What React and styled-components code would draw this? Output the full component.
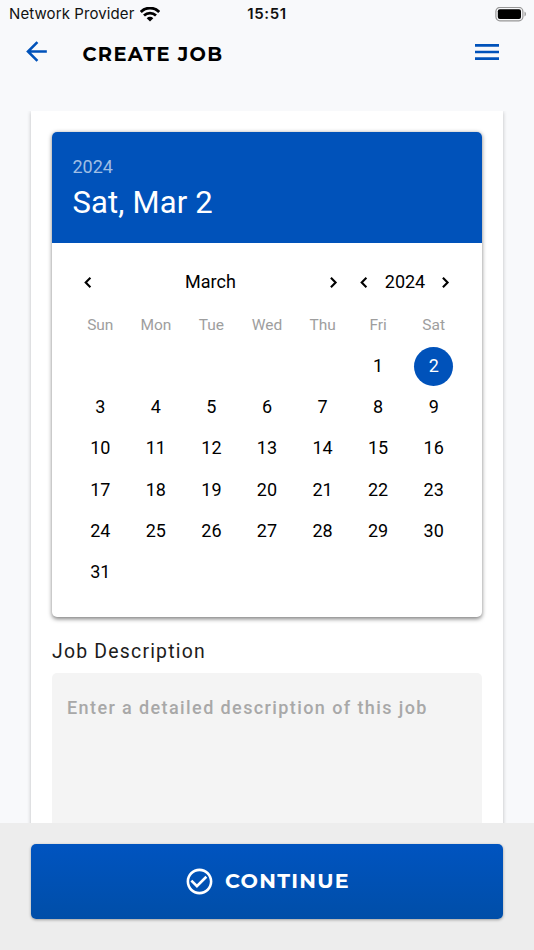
import React from "react";
import styled, { createGlobalStyle } from "styled-components";
import { MdArrowBack, MdMenu, MdCheckCircleOutline } from "react-icons/md";

const GlobalStyle = createGlobalStyle`
  * {
    box-sizing: border-box;
  }
  body {
    margin: 0;
    background: #f8f9fb;
    font-family: Roboto, sans-serif;
  }
  button {
    padding: 0;
    border: none;
    background: none;
    color: inherit;
    font-family: inherit;
    cursor: pointer;
  }
  svg {
    display: block;
  }
`;

const Screen = styled.div`
  height: 950px;
  display: flex;
  flex-direction: column;
  overflow: hidden;
`;

const StatusBar = styled.div`
  height: 28px;
  padding: 0 7px 0 9px;
  display: grid;
  grid-template-columns: 1fr auto 1fr;
  align-items: center;
  font-family: Inter, sans-serif;
  font-size: 15px;
  line-height: 28px;
  color: #111;
`;

const Carrier = styled.div`
  display: flex;
  align-items: center;
  gap: 6px;
  letter-spacing: 0.1px;
`;

const Clock = styled.div`
  margin-left: -2px;
  font-weight: 600;
  letter-spacing: 0.6px;
`;

const Battery = styled.div`
  display: flex;
  justify-content: flex-end;
`;

const Header = styled.div`
  height: 83px;
  padding: 8px 31px 0 21px;
  display: flex;
  align-items: flex-start;
`;

const IconButton = styled.button`
  color: #0052ba;
`;

const Title = styled.h1`
  flex: 1;
  margin: 1px 0 0 30.5px;
  font-family: Montserrat, Inter, sans-serif;
  font-size: 19.4px;
  font-weight: 700;
  line-height: 34px;
  letter-spacing: 1.32px;
  text-transform: uppercase;
  color: #000;
`;

const Content = styled.div`
  flex: 1;
  min-height: 0;
  padding: 0 31px;
  overflow: hidden;
`;

const Card = styled.div`
  height: 760px;
  padding: 21px 21px 0;
  background: white;
  box-shadow: 0 1px 4px rgba(0, 0, 0, 0.24);
`;

const Calendar = styled.div`
  height: 485px;
  border-radius: 5px;
  overflow: hidden;
  background: white;
  box-shadow: 0 1.5px 4px rgba(0, 0, 0, 0.5);
`;

const CalendarTop = styled.div`
  height: 111px;
  padding: 24px 20.5px 0;
  background: #0052ba;
  color: white;
`;

const TopYear = styled.div`
  font-size: 18px;
  line-height: 22px;
  color: rgba(255, 255, 255, 0.63);
`;

const TopDate = styled.div`
  margin-top: 7px;
  font-size: 31px;
  line-height: 36px;
  letter-spacing: 0.15px;
`;

const CalendarBody = styled.div`
  padding: 21px 20.5px 0;
`;

const Pickers = styled.div`
  height: 36px;
  padding: 0 4.5px 0 4px;
  display: flex;
  align-items: center;
  justify-content: space-between;
  font-size: 18px;
  color: #000;
`;

const Picker = styled.div`
  width: ${(props) => props.$width}px;
  display: flex;
  align-items: center;
  justify-content: space-between;
  line-height: 36px;
`;

const Arrow = styled.button`
  padding-top: 1px;
`;

const Grid = styled.div`
  display: grid;
  grid-template-columns: repeat(7, 1fr);
  justify-items: center;
`;

const Weekday = styled.div`
  height: 46px;
  font-size: 15.5px;
  line-height: 51px;
  color: #9e9e9e;
`;

const Day = styled.button`
  height: 41.2px;
  grid-column-start: ${(props) => props.$column || "auto"};
  display: flex;
  align-items: center;
  justify-content: center;
  font-size: 18px;
  line-height: 38px;
  color: ${(props) => (props.$selected ? "white" : "#000")};
`;

const DayNumber = styled.span`
  width: 39px;
  height: 39px;
  border-radius: 50%;
  background: ${(props) => (props.$selected ? "#0052ba" : "transparent")};
`;

const Label = styled.label`
  display: block;
  margin-top: 22px;
  font-size: 19.4px;
  line-height: 26px;
  letter-spacing: 1.22px;
  color: #1c1c1c;
`;

const TextArea = styled.textarea`
  display: block;
  width: 100%;
  height: 190px;
  margin-top: 7.5px;
  padding: 22px 15px;
  border: none;
  border-radius: 5px;
  outline: none;
  resize: none;
  background: #f4f4f4;
  font-family: Roboto, sans-serif;
  font-size: 18px;
  font-weight: 500;
  line-height: 26px;
  letter-spacing: 1.4px;

  &::placeholder {
    color: #a8a8a8;
    opacity: 1;
  }
`;

const Footer = styled.div`
  height: 127px;
  padding: 21px 31px 0;
  background: #ededed;
`;

const ContinueButton = styled.button`
  width: 100%;
  height: 75px;
  display: flex;
  align-items: center;
  justify-content: center;
  gap: 10px;
  border-radius: 5px;
  background: linear-gradient(#0054c0, #004ea8);
  box-shadow: 0 1px 3px rgba(0, 0, 0, 0.35);
  color: white;
  font-family: Montserrat, Inter, sans-serif;
  font-size: 20.65px;
  font-weight: 700;
  line-height: 26px;
  letter-spacing: 1.29px;
  text-transform: uppercase;
`;

const ButtonText = styled.span`
  padding-bottom: 1px;
`;

const weekdays = ["Sun", "Mon", "Tue", "Wed", "Thu", "Fri", "Sat"];
const days = Array.from({ length: 31 }, (_, i) => i + 1);
const firstColumn = 6;
const selectedDay = 2;

const WifiIcon = () => (
  <svg width="20" height="15" viewBox="0 0 20 15" fill="none" stroke="#000">
    <path d="M0.8 5C6 -0.2 14 -0.2 19.2 5" strokeWidth="2.9" />
    <path d="M4 8.5C7.4 5.2 12.6 5.2 16 8.5" strokeWidth="2.7" />
    <path d="M6.7 11.2C8.6 9.4 11.4 9.4 13.3 11.2L10 14.4Z" fill="#000" stroke="none" />
  </svg>
);

const BatteryIcon = () => (
  <svg width="32" height="15" viewBox="0 0 32 15">
    <rect x="0.9" y="0.4" width="27" height="13.4" rx="4" fill="none" stroke="#979797" strokeWidth="1.2" />
    <rect x="2.8" y="2.2" width="23.2" height="9.8" rx="2" fill="#000" />
    <path d="M29.5 4.6V9.6C31.4 8.8 31.4 5.4 29.5 4.6Z" fill="#979797" />
  </svg>
);

const Chevron = ({ left }) => (
  <svg width="23" height="23" viewBox="0 0 23 23" fill="none" stroke="#000" strokeWidth="2.1">
    <path d={left ? "M13.4 6.8L8.7 11.5L13.4 16.2" : "M8.9 6.8L13.6 11.5L8.9 16.2"} />
  </svg>
);

const App = () => {
  return (
    <>
      <GlobalStyle />
      <Screen>
        <StatusBar>
          <Carrier>
            Network Provider
            <WifiIcon />
          </Carrier>
          <Clock>15:51</Clock>
          <Battery>
            <BatteryIcon />
          </Battery>
        </StatusBar>

        <Header>
          <IconButton aria-label="Back">
            <MdArrowBack size={31} />
          </IconButton>
          <Title>Create Job</Title>
          <IconButton aria-label="Menu">
            <MdMenu size={32} />
          </IconButton>
        </Header>

        <Content>
          <Card>
            <Calendar>
              <CalendarTop>
                <TopYear>2024</TopYear>
                <TopDate>Sat, Mar 2</TopDate>
              </CalendarTop>
              <CalendarBody>
                <Pickers>
                  <Picker $width={268}>
                    <Arrow aria-label="Previous month">
                      <Chevron left />
                    </Arrow>
                    March
                    <Arrow aria-label="Next month">
                      <Chevron />
                    </Arrow>
                  </Picker>
                  <Picker $width={104}>
                    <Arrow aria-label="Previous year">
                      <Chevron left />
                    </Arrow>
                    2024
                    <Arrow aria-label="Next year">
                      <Chevron />
                    </Arrow>
                  </Picker>
                </Pickers>
                <Grid>
                  {weekdays.map((name) => (
                    <Weekday key={name}>{name}</Weekday>
                  ))}
                  {days.map((day) => (
                    <Day
                      key={day}
                      $column={day === 1 ? firstColumn : null}
                      $selected={day === selectedDay}
                    >
                      <DayNumber $selected={day === selectedDay}>{day}</DayNumber>
                    </Day>
                  ))}
                </Grid>
              </CalendarBody>
            </Calendar>

            <Label htmlFor="description">Job Description</Label>
            <TextArea
              id="description"
              placeholder="Enter a detailed description of this job"
            />
          </Card>
        </Content>

        <Footer>
          <ContinueButton>
            <MdCheckCircleOutline size={31} />
            <ButtonText>Continue</ButtonText>
          </ContinueButton>
        </Footer>
      </Screen>
    </>
  );
};

export default App;
